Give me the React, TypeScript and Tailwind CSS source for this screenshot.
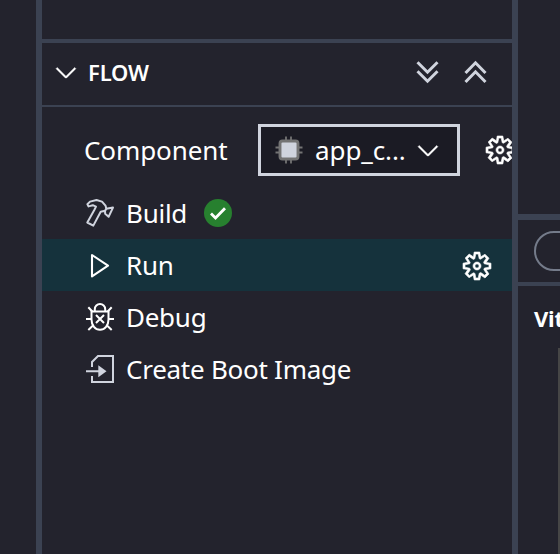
import type { ReactNode } from 'react';

const GEAR =
  'M9.1 4.4L8.6 2H7.4l-.5 2.4-.7.3-2-1.3-.9.8 1.3 2-.2.7-2.4.5v1.2l2.4.5.3.8-1.3 2 .8.8 2-1.3.8.3.4 2.3h1.2l.5-2.4.8-.3 2 1.3.8-.8-1.3-2 .3-.8 2.3-.4V7.4l-2.4-.5-.3-.8 1.3-2-.8-.8-2 1.3-.7-.2zM9.4 1l.5 2.4L12 2.1l2 2-1.4 2.1 2.4.4v2.8l-2.4.5L14 12l-2 2-2.1-1.4-.5 2.4H6.6l-.5-2.4L4 13.9l-2-2 1.4-2.1L1 9.4V6.6l2.4-.5L2.1 4l2-2 2.1 1.4.4-2.4h2.8zm.6 7c0 1.1-.9 2-2 2s-2-.9-2-2 .9-2 2-2 2 .9 2 2zM8 9c.6 0 1-.4 1-1s-.4-1-1-1-1 .4-1 1 .4 1 1 1z';

function Gear() {
  return (
    <svg className="size-8 shrink-0" viewBox="0 0 16 16" fill="#fff" stroke="#fff" strokeWidth=".3" fillRule="evenodd">
      <path d={GEAR} />
    </svg>
  );
}

function Chevron() {
  return (
    <svg className="size-8 shrink-0" viewBox="0 0 16 16" fill="#fff" stroke="#fff" strokeWidth=".2">
      <path d="M7.976 10.072l4.357-4.357.62.618L8.284 11h-.618L3 6.333l.619-.618 4.357 4.357z" />
    </svg>
  );
}

function DoubleChevron({ up = false }: { up?: boolean }) {
  return (
    <svg className="size-6 shrink-0" viewBox="0 0 24 24" fill="none" stroke="#d0d4de" strokeWidth="3">
      <path d={up ? 'M2.5 13L12.5 2.8L22.5 13M2.5 22L12.5 11.8L22.5 22' : 'M2.5 2.2L12.5 12.2L22.5 2.2M2.5 11.2L12.5 21.2L22.5 11.2'} />
    </svg>
  );
}

function Hammer() {
  return (
    <svg className="size-8" viewBox="0 0 32 32" fill="none" stroke="#d0d4de" strokeWidth="2" strokeLinejoin="round">
      <path d="M3.4 7.3L6 4.6L12.5 3L18 4.6L21.5 8.6L22.3 11.8L29 10.6L24.6 19.8L21.2 16.8L21 13.8L16.7 14.7L9.3 28.6L3.3 25.5L10.3 13L12 9.6L8.8 8.2L4.6 9.4Z" />
      <path d="M22.3 11.8L21 14" />
    </svg>
  );
}

function Play() {
  return (
    <svg className="size-8" viewBox="0 0 32 32" fill="none" stroke="#fff" strokeWidth="2.1" strokeLinejoin="round">
      <path d="M8 6V27.4L24 16.7Z" />
    </svg>
  );
}

function Bug() {
  return (
    <svg className="size-8" viewBox="0 0 32 32" fill="none" stroke="#fff" strokeWidth="2">
      <path d="M10.8 10V8.2A5.2 5.2 0 0 1 21.2 8.2V10" />
      <path d="M7.5 10.4H24.5V18.5C24.5 24.5 20.8 28.8 16 28.8S7.5 24.5 7.5 18.5Z" />
      <path d="M2 18H7.5M24.5 18H30M4.3 6.2L8.3 10.5M27.7 6.2L23.7 10.5M4.3 29L9 24.5M27.7 29L23 24.5M12 14L20 22M20 14L12 22" />
    </svg>
  );
}

function BootImage() {
  return (
    <svg className="size-8" viewBox="0 0 32 32" fill="none" stroke="#d0d4de" strokeWidth="2">
      <path d="M8 14V9L14 3H29V29H8V23M2 18.3H15" />
      <path d="M14.3 12.3L22.5 18.3L14.3 24.3Z" fill="#d0d4de" stroke="none" />
    </svg>
  );
}

function Chip() {
  return (
    <svg className="h-7 w-7 shrink-0" viewBox="0 0 28 28" stroke="#747474" strokeWidth="1.8">
      <path d="M11 0.5V27.5M16 0.5V27.5M0.5 11.5H27.5M0.5 16.5H27.5" />
      <rect x="5" y="5" width="18" height="18" rx="2.5" fill="#d0d4de" strokeWidth="2.9" />
    </svg>
  );
}

function Check() {
  return (
    <svg className="ml-[17px] size-7" viewBox="0 0 28 28">
      <circle cx="14" cy="14" r="14" fill="#27802f" />
      <path d="M7 14.5L11.5 19L21 9.3" fill="none" stroke="#fff" strokeWidth="2.8" />
    </svg>
  );
}

function Row({ icon, label, active = false, children }: { icon: ReactNode; label: string; active?: boolean; children?: ReactNode }) {
  return (
    <div className={`flex h-13 items-center pl-[42px] pr-[19px] ${active ? 'bg-[#15323c]' : ''}`}>
      {icon}
      <span className="ml-[10px] tracking-[-0.26px]">{label}</span>
      {children}
    </div>
  );
}

export default function App() {
  return (
    <div className="flex h-[554px] w-[560px] overflow-hidden whitespace-nowrap bg-[#23232d] font-['Noto_Sans',sans-serif] text-[26px] leading-[36px] text-white">
      <div className="w-9 shrink-0" />
      <main className="w-[482px] shrink-0 overflow-hidden border-x-6 border-[#3b4252]">
        <div className="h-[39px]" />
        <header className="flex h-[68px] items-center border-t-4 border-b-2 border-[#3b4252] pr-[25px] pb-[4px] pl-2">
          <Chevron />
          <h2 className="-mt-px ml-[6px] text-[22px] font-semibold tracking-[-0.2px]">FLOW</h2>
          <div className="ml-auto flex gap-6">
            <DoubleChevron />
            <DoubleChevron up />
          </div>
        </header>
        <div className="mt-[17px] mb-[11px] flex h-[52px] items-center pl-[42px]">
          <span className="w-[174px] shrink-0 tracking-[-0.1px]">Component</span>
          <div className="flex h-[52px] w-[202px] shrink-0 items-center border-3 border-[#d0d4de] bg-[#1b1b24] pl-[14px]">
            <Chip />
            <span className="ml-3 w-[97px] tracking-[-0.1px]">app_c...</span>
            <Chevron />
          </div>
          <div className="ml-[24px] flex shrink-0">
            <Gear />
          </div>
        </div>
        <Row icon={<Hammer />} label="Build">
          <Check />
        </Row>
        <Row icon={<Play />} label="Run" active>
          <div className="ml-auto pt-px">
            <Gear />
          </div>
        </Row>
        <Row icon={<Bug />} label="Debug" />
        <Row icon={<BootImage />} label="Create Boot Image" />
      </main>
      <aside className="w-[42px] shrink-0 overflow-hidden">
        <div className="h-[214px]" />
        <div className="h-[72px] border-t-6 border-b-4 border-[#3b4252] pt-[11px] pl-4">
          <div className="h-10 w-24 rounded-full border-2 border-[#747b8a]" />
        </div>
        <h2 className="mt-[14px] pl-4 text-[22px] font-bold tracking-[-0.2px]">Vitis</h2>
        <div className="mt-[12px] ml-10 h-[206px] w-24 border-l-2 border-[#464646]" />
      </aside>
    </div>
  );
}
